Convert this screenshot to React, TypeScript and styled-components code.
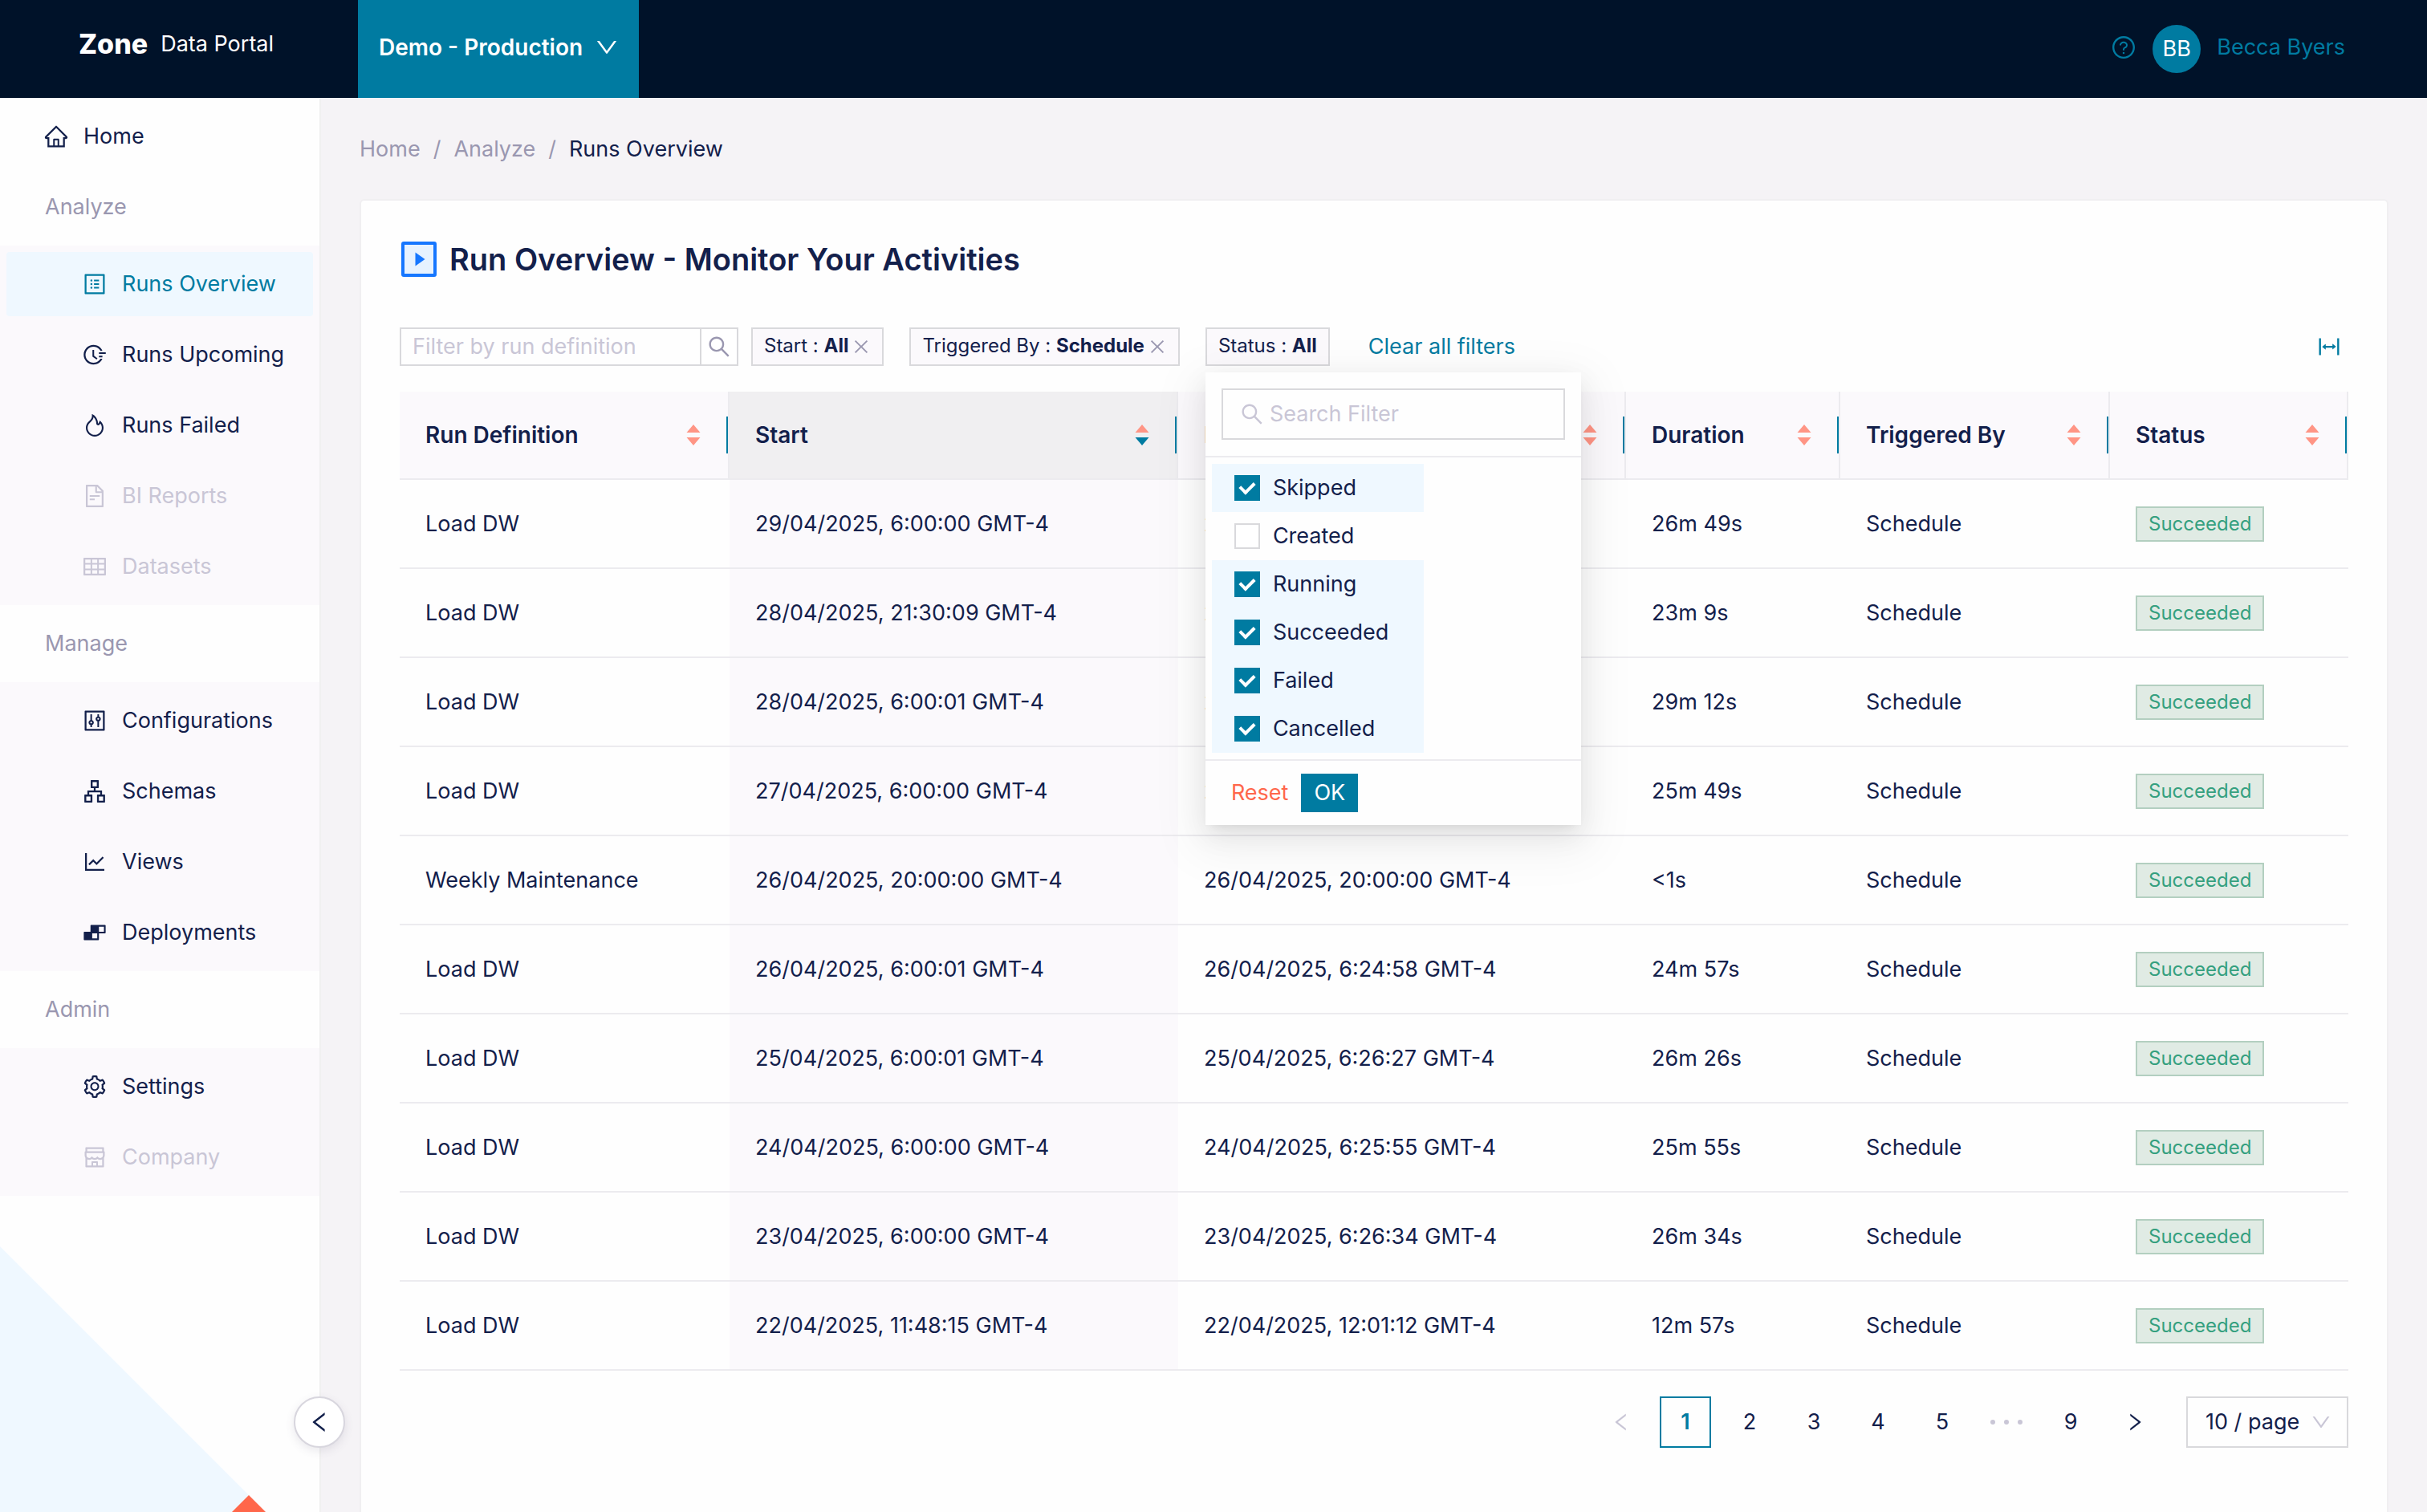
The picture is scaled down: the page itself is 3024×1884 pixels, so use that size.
import React, { useState } from 'react';
import styled, { createGlobalStyle } from 'styled-components';
import {
  AiFillBuild,
  AiOutlineApartment,
  AiOutlineClose,
  AiOutlineColumnWidth,
  AiOutlineControl,
  AiOutlineDown,
  AiOutlineFieldTime,
  AiOutlineFileText,
  AiOutlineFire,
  AiOutlineHome,
  AiOutlineLeft,
  AiOutlineLineChart,
  AiOutlineProfile,
  AiOutlineQuestionCircle,
  AiOutlineRight,
  AiOutlineSearch,
  AiOutlineSetting,
  AiOutlineShop,
  AiOutlineTable,
} from 'react-icons/ai';

const c = {
  navy: '#001229',
  teal: '#007ba1',
  text: '#13204b',
  muted: '#9a97b0',
  disabled: '#c9c6d6',
  coral: '#ff674b',
  sorter: '#ff9585',
  page: '#f5f3f6',
  soft: '#fbf9fc',
  select: '#eff8ff',
  line: '#ecebef',
  border: '#d9d9dc',
};

const GlobalStyle = createGlobalStyle`
  *, *::before, *::after { box-sizing: border-box; }
  body {
    margin: 0;
    background: ${c.page};
    color: ${c.text};
    font-family: Inter, "Liberation Sans", sans-serif;
    font-size: 27px;
    line-height: 44px;
  }
  button, input, select { font: inherit; color: inherit; margin: 0; }
  button { cursor: pointer; }
  a { color: inherit; text-decoration: none; }
  svg { display: block; flex: none; }
`;

const Shell = styled.div`
  display: flex;
  flex-direction: column;
  height: 100vh;
`;

const Header = styled.header`
  display: flex;
  height: 122px;
  flex: none;
  background: ${c.navy};
  color: #fff;
`;

const Brand = styled.a`
  display: flex;
  align-items: center;
  gap: 16px;
  width: 446px;
  padding: 0 0 12px 98px;
`;

const BrandName = styled.strong`
  font-size: 34px;
  font-weight: 800;
`;

const EnvButton = styled.button`
  display: flex;
  align-items: center;
  gap: 14px;
  padding: 0 24px 4px 26px;
  border: 0;
  background: ${c.teal};
  color: #fff;
  font-size: 28px;
  font-weight: 600;
`;

const UserArea = styled.div`
  display: flex;
  align-items: center;
  gap: 20px;
  margin-left: auto;
  padding: 0 102px 4px 0;
  color: ${c.teal};
`;

const PlainButton = styled.button`
  display: flex;
  padding: 0;
  border: 0;
  background: none;
  color: inherit;
`;

const Avatar = styled.span`
  width: 60px;
  height: 60px;
  margin-top: 4px;
  border-radius: 50%;
  background: ${c.teal};
  color: #fff;
  line-height: 60px;
  text-align: center;
`;

const Body = styled.div`
  display: flex;
  flex: 1;
  min-height: 0;
`;

const Sidebar = styled.aside`
  position: relative;
  display: flex;
  flex-direction: column;
  flex: none;
  width: 400px;
  border-right: 2px solid #f0f0f0;
  background: #fefefe;
`;

const Nav = styled.nav`
  display: flex;
  flex-direction: column;
  padding-top: 8px;
`;

const NavItem = styled.a<{ $nested?: boolean; $active?: boolean; $disabled?: boolean }>`
  display: flex;
  align-items: center;
  gap: 18px;
  height: 80px;
  margin: 0 8px;
  padding-left: ${(p) => (p.$nested ? 94 : 46)}px;
  border-radius: 4px;
  background: ${(p) => (p.$active ? c.select : 'transparent')};
  color: ${(p) => (p.$active ? c.teal : p.$disabled ? c.disabled : c.text)};
`;

const NavHeading = styled.h2`
  height: 80px;
  margin: 8px 0;
  padding-left: 56px;
  color: ${c.muted};
  font-size: 27px;
  font-weight: 400;
  line-height: 80px;
`;

const NavGroup = styled.div`
  display: flex;
  flex-direction: column;
  gap: 8px;
  padding: 8px 0;
  background: ${c.soft};
`;

const Backdrop = styled.svg`
  margin-top: auto;
  width: 100%;
`;

const CollapseButton = styled.button`
  position: absolute;
  right: -32px;
  bottom: 80px;
  display: flex;
  align-items: center;
  justify-content: center;
  width: 64px;
  height: 64px;
  padding: 0;
  border: 2px solid #d8d6de;
  border-radius: 50%;
  background: #fff;
  box-shadow: 0 4px 12px rgba(80, 70, 110, 0.12);
`;

const Main = styled.main`
  display: flex;
  flex-direction: column;
  flex: 1;
  min-width: 0;
  padding: 42px 48px 0;
  overflow-y: auto;
  scrollbar-width: none;
`;

const Crumbs = styled.nav`
  display: flex;
  gap: 16px;
  margin-bottom: 40px;
  color: ${c.muted};
`;

const CurrentCrumb = styled.span`
  color: ${c.text};
`;

const Card = styled.section`
  padding: 44px 48px 96px;
  border: 2px solid #f0eff1;
  border-radius: 6px;
  background: #fefefe;
`;

const TitleRow = styled.div`
  display: flex;
  align-items: center;
  gap: 16px;
  margin-bottom: 56px;
  padding-left: 2px;
`;

const Title = styled.h1`
  margin: 0;
  font-size: 38px;
  font-weight: 600;
  line-height: 58px;
`;

const FilterRow = styled.div`
  display: flex;
  align-items: center;
  gap: 32px;
  height: 48px;
  margin-bottom: 32px;
`;

const SearchBox = styled.div`
  display: flex;
  width: 422px;
  height: 48px;
  margin-right: -16px;
  border: 2px solid ${c.border};
`;

const TextInput = styled.input`
  flex: 1;
  min-width: 0;
  padding: 0 14px;
  border: 0;
  outline: 0;
  background: transparent;
  &::placeholder { color: ${c.disabled}; opacity: 1; }
`;

const SearchButton = styled.button`
  display: flex;
  align-items: center;
  justify-content: center;
  width: 46px;
  padding: 0;
  border: 0;
  border-left: 2px solid ${c.border};
  background: #fff;
  color: ${c.muted};
`;

const FilterAnchor = styled.div`
  position: relative;
`;

const FilterTag = styled.div`
  display: flex;
  align-items: center;
  gap: 4px;
  height: 48px;
  padding: 0 14px;
  border: 2px solid ${c.border};
  background: ${c.soft};
  font-size: 24px;
  line-height: 40px;
  white-space: pre;
  ${PlainButton} { color: ${c.muted}; }
`;

const TagText = styled.span`
  padding-bottom: 2px;
`;

const ClearButton = styled(PlainButton)`
  margin-left: 16px;
  color: ${c.teal};
`;

const WidthButton = styled(PlainButton)`
  margin-left: auto;
  margin-right: 8px;
  color: ${c.teal};
`;

const Popup = styled.div`
  position: absolute;
  z-index: 2;
  top: 56px;
  left: 0;
  width: 468px;
  background: #fefefe;
  box-shadow:
    0 12px 32px rgba(0, 0, 0, 0.08),
    0 6px 12px -8px rgba(0, 0, 0, 0.12),
    0 18px 56px 16px rgba(0, 0, 0, 0.05);
`;

const PopupSearch = styled.div`
  padding: 20px;
  border-bottom: 2px solid ${c.line};
`;

const PopupField = styled.label`
  display: flex;
  align-items: center;
  height: 64px;
  padding-left: 20px;
  border: 2px solid ${c.border};
  color: ${c.disabled};
  ${TextInput} { padding: 0 6px; }
`;

const OptionList = styled.div`
  width: 264px;
  margin: 8px;
`;

const Option = styled.label<{ $checked: boolean }>`
  display: flex;
  align-items: center;
  gap: 16px;
  height: 60px;
  padding-left: 28px;
  background: ${(p) => (p.$checked ? c.select : 'transparent')};
`;

const Checkbox = styled.input`
  appearance: none;
  display: flex;
  justify-content: center;
  width: 32px;
  height: 32px;
  border: 2px solid ${c.border};
  background: #fff;
  &:checked {
    border-color: ${c.teal};
    background: ${c.teal};
  }
  &:checked::after {
    content: '';
    width: 12px;
    height: 18px;
    margin-top: 3px;
    border: solid #fff;
    border-width: 0 4px 4px 0;
    transform: rotate(45deg);
  }
`;

const PopupFooter = styled.div`
  display: flex;
  padding: 16px;
  border-top: 2px solid ${c.line};
`;

const SmallButton = styled.button<{ $primary?: boolean }>`
  height: 48px;
  padding: 0 16px;
  border: 0;
  background: ${(p) => (p.$primary ? c.teal : 'transparent')};
  color: ${(p) => (p.$primary ? '#fff' : c.coral)};
`;

const Table = styled.table`
  width: 100%;
  table-layout: fixed;
  border-collapse: separate;
  border-spacing: 0;
  text-align: left;
`;

const Th = styled.th<{ $sorted: boolean }>`
  height: 110px;
  padding: 0;
  border-right: 2px solid ${c.line};
  border-bottom: 2px solid ${c.line};
  background: ${(p) => (p.$sorted ? '#f0eff1' : c.soft)};
  font-size: 28px;
  font-weight: 600;
`;

const ThInner = styled.div`
  display: flex;
  align-items: center;
  padding-left: 32px;
`;

const SortButton = styled(PlainButton)`
  margin: 0 32px 0 auto;
`;

const ResizeBar = styled.span`
  width: 2px;
  height: 46px;
  background: ${c.teal};
`;

const Td = styled.td<{ $sorted?: boolean }>`
  height: 111px;
  padding: 0 0 0 32px;
  border-bottom: 2px solid ${c.line};
  background: ${(p) => (p.$sorted ? c.soft : 'transparent')};
  white-space: nowrap;
`;

const StatusTag = styled.span`
  display: block;
  width: fit-content;
  height: 44px;
  padding: 0 14px;
  border: 2px solid #b3cfc0;
  background: #e0ebe4;
  color: #35a07f;
  font-size: 24px;
  line-height: 40px;
`;

const Pagination = styled.nav`
  display: flex;
  justify-content: flex-end;
  gap: 16px;
  margin-top: 32px;
`;

const PageButton = styled.button<{ $active?: boolean; $faint?: boolean }>`
  display: flex;
  align-items: center;
  justify-content: center;
  width: 64px;
  height: 64px;
  padding: 0;
  border: 2px solid ${(p) => (p.$active ? c.teal : 'transparent')};
  background: transparent;
  color: ${(p) => (p.$active ? c.teal : p.$faint ? c.disabled : c.text)};
  font-weight: ${(p) => (p.$active ? 600 : 400)};
`;

const PageSize = styled.div`
  display: flex;
  align-items: center;
  width: 202px;
  height: 64px;
  margin-left: 16px;
  border: 2px solid ${c.border};
  color: ${c.disabled};
  svg { margin-left: -46px; pointer-events: none; }
`;

const PageSelect = styled.select`
  appearance: none;
  flex: none;
  width: 100%;
  height: 60px;
  padding: 0 22px;
  border: 0;
  outline: 0;
  background: transparent;
  color: ${c.text};
`;

const navGroups = [
  {
    title: 'Analyze',
    items: [
      { label: 'Runs Overview', icon: AiOutlineProfile, active: true },
      { label: 'Runs Upcoming', icon: AiOutlineFieldTime },
      { label: 'Runs Failed', icon: AiOutlineFire },
      { label: 'BI Reports', icon: AiOutlineFileText, disabled: true },
      { label: 'Datasets', icon: AiOutlineTable, disabled: true },
    ],
  },
  {
    title: 'Manage',
    items: [
      { label: 'Configurations', icon: AiOutlineControl },
      { label: 'Schemas', icon: AiOutlineApartment },
      { label: 'Views', icon: AiOutlineLineChart },
      { label: 'Deployments', icon: AiFillBuild },
    ],
  },
  {
    title: 'Admin',
    items: [
      { label: 'Settings', icon: AiOutlineSetting },
      { label: 'Company', icon: AiOutlineShop, disabled: true },
    ],
  },
] as {
  title: string;
  items: { label: string; icon: React.ComponentType<{ size?: number }>; active?: boolean; disabled?: boolean }[];
}[];

const columns = [
  { title: 'Run Definition', width: 411 },
  { title: 'Start', width: 559, sorted: true },
  { title: 'End', width: 558 },
  { title: 'Duration', width: 267 },
  { title: 'Triggered By', width: 336 },
  { title: 'Status', width: 297 },
];

const runs = [
  ['Load DW', '29/04/2025, 6:00:00 GMT-4', '29/04/2025, 6:26:49 GMT-4', '26m 49s'],
  ['Load DW', '28/04/2025, 21:30:09 GMT-4', '28/04/2025, 21:53:18 GMT-4', '23m 9s'],
  ['Load DW', '28/04/2025, 6:00:01 GMT-4', '28/04/2025, 6:29:13 GMT-4', '29m 12s'],
  ['Load DW', '27/04/2025, 6:00:00 GMT-4', '27/04/2025, 6:25:49 GMT-4', '25m 49s'],
  ['Weekly Maintenance', '26/04/2025, 20:00:00 GMT-4', '26/04/2025, 20:00:00 GMT-4', '<1s'],
  ['Load DW', '26/04/2025, 6:00:01 GMT-4', '26/04/2025, 6:24:58 GMT-4', '24m 57s'],
  ['Load DW', '25/04/2025, 6:00:01 GMT-4', '25/04/2025, 6:26:27 GMT-4', '26m 26s'],
  ['Load DW', '24/04/2025, 6:00:00 GMT-4', '24/04/2025, 6:25:55 GMT-4', '25m 55s'],
  ['Load DW', '23/04/2025, 6:00:00 GMT-4', '23/04/2025, 6:26:34 GMT-4', '26m 34s'],
  ['Load DW', '22/04/2025, 11:48:15 GMT-4', '22/04/2025, 12:01:12 GMT-4', '12m 57s'],
];

const statuses = ['Skipped', 'Created', 'Running', 'Succeeded', 'Failed', 'Cancelled'];

const SortIcon = ({ descending }: { descending?: boolean }) => (
  <svg width="18" height="26" viewBox="0 0 18 26" aria-hidden="true">
    <path d="M9 0L17.5 10H0.5z" fill={c.sorter} />
    <path d="M9 26L0.5 16H17.5z" fill={descending ? c.teal : c.sorter} />
  </svg>
);

const PlaySquareIcon = () => (
  <svg width="44" height="44" viewBox="0 0 44 44" aria-hidden="true">
    <rect x="2" y="2" width="40" height="40" rx="1" fill="#e6f2ff" stroke="#1677ff" strokeWidth="4" />
    <path d="M17.5 13.5L29.5 22L17.5 30.5z" fill="#1677ff" />
  </svg>
);

const EllipsisIcon = () => (
  <svg width="42" height="8" viewBox="0 0 42 8" fill={c.disabled} aria-hidden="true">
    <circle cx="4" cy="4" r="3" />
    <circle cx="21" cy="4" r="3" />
    <circle cx="38" cy="4" r="3" />
  </svg>
);

function StatusFilter() {
  const [checked, setChecked] = useState<string[]>(statuses.filter((s) => s !== 'Created'));
  const toggle = (name: string) =>
    setChecked((prev) => (prev.includes(name) ? prev.filter((s) => s !== name) : [...prev, name]));

  return (
    <Popup role="dialog" aria-label="Status filter">
      <PopupSearch>
        <PopupField>
          <AiOutlineSearch size={32} />
          <TextInput placeholder="Search Filter" aria-label="Search Filter" />
        </PopupField>
      </PopupSearch>
      <OptionList>
        {statuses.map((s) => (
          <Option key={s} $checked={checked.includes(s)}>
            <Checkbox type="checkbox" checked={checked.includes(s)} onChange={() => toggle(s)} />
            {s}
          </Option>
        ))}
      </OptionList>
      <PopupFooter>
        <SmallButton onClick={() => setChecked([])}>Reset</SmallButton>
        <SmallButton $primary>OK</SmallButton>
      </PopupFooter>
    </Popup>
  );
}

export default function App() {
  return (
    <Shell>
      <GlobalStyle />
      <Header>
        <Brand href="#home">
          <BrandName>Zone</BrandName>
          <span>Data Portal</span>
        </Brand>
        <EnvButton>
          Demo - Production
          <AiOutlineDown size={32} />
        </EnvButton>
        <UserArea>
          <PlainButton aria-label="Help">
            <AiOutlineQuestionCircle size={32} />
          </PlainButton>
          <Avatar>BB</Avatar>
          <a href="#account">Becca Byers</a>
        </UserArea>
      </Header>
      <Body>
        <Sidebar>
          <Nav aria-label="Main">
            <NavItem href="#home">
              <AiOutlineHome size={32} />
              Home
            </NavItem>
            {navGroups.map((group) => (
              <React.Fragment key={group.title}>
                <NavHeading>{group.title}</NavHeading>
                <NavGroup>
                  {group.items.map(({ label, icon: Icon, active, disabled }) => (
                    <NavItem
                      key={label}
                      href={disabled ? undefined : '#' + label}
                      $nested
                      $active={active}
                      $disabled={disabled}
                    >
                      <Icon size={32} />
                      {label}
                    </NavItem>
                  ))}
                </NavGroup>
              </React.Fragment>
            ))}
          </Nav>
          <Backdrop viewBox="0 0 398 331" aria-hidden="true">
            <path d="M0 0L331 331H0z" fill={c.select} />
            <path d="M310 310L331 331H289z" fill={c.coral} />
          </Backdrop>
          <CollapseButton aria-label="Collapse sidebar">
            <AiOutlineLeft size={32} />
          </CollapseButton>
        </Sidebar>
        <Main>
          <Crumbs aria-label="Breadcrumb">
            <a href="#home">Home</a>
            <span>/</span>
            <a href="#analyze">Analyze</a>
            <span>/</span>
            <CurrentCrumb>Runs Overview</CurrentCrumb>
          </Crumbs>
          <Card>
            <TitleRow>
              <PlaySquareIcon />
              <Title>Run Overview - Monitor Your Activities</Title>
            </TitleRow>
            <FilterRow>
              <SearchBox>
                <TextInput placeholder="Filter by run definition" aria-label="Filter by run definition" />
                <SearchButton aria-label="Search">
                  <AiOutlineSearch size={32} />
                </SearchButton>
              </SearchBox>
              <FilterTag>
                <TagText>
                  Start : <b>All</b>
                </TagText>
                <PlainButton aria-label="Remove start filter">
                  <AiOutlineClose size={24} />
                </PlainButton>
              </FilterTag>
              <FilterTag>
                <TagText>
                  Triggered By : <b>Schedule</b>
                </TagText>
                <PlainButton aria-label="Remove triggered by filter">
                  <AiOutlineClose size={24} />
                </PlainButton>
              </FilterTag>
              <FilterAnchor>
                <FilterTag>
                  <TagText>
                    Status : <b>All</b>
                  </TagText>
                </FilterTag>
                <StatusFilter />
              </FilterAnchor>
              <ClearButton>Clear all filters</ClearButton>
              <WidthButton aria-label="Fit column widths">
                <AiOutlineColumnWidth size={32} />
              </WidthButton>
            </FilterRow>
            <Table>
              <colgroup>
                {columns.map((col) => (
                  <col key={col.title} style={{ width: col.width }} />
                ))}
              </colgroup>
              <thead>
                <tr>
                  {columns.map((col) => (
                    <Th key={col.title} scope="col" $sorted={!!col.sorted}>
                      <ThInner>
                        {col.title}
                        <SortButton aria-label={'Sort by ' + col.title}>
                          <SortIcon descending={col.sorted} />
                        </SortButton>
                        <ResizeBar />
                      </ThInner>
                    </Th>
                  ))}
                </tr>
              </thead>
              <tbody>
                {runs.map(([name, start, end, duration]) => (
                  <tr key={start}>
                    <Td>{name}</Td>
                    <Td $sorted>{start}</Td>
                    <Td>{end}</Td>
                    <Td>{duration}</Td>
                    <Td>Schedule</Td>
                    <Td>
                      <StatusTag>Succeeded</StatusTag>
                    </Td>
                  </tr>
                ))}
              </tbody>
            </Table>
            <Pagination aria-label="Pagination">
              <PageButton $faint aria-label="Previous page">
                <AiOutlineLeft size={28} />
              </PageButton>
              {[1, 2, 3, 4, 5].map((n) => (
                <PageButton key={n} $active={n === 1}>
                  {n}
                </PageButton>
              ))}
              <PageButton $faint aria-label="Next 5 pages">
                <EllipsisIcon />
              </PageButton>
              <PageButton>9</PageButton>
              <PageButton aria-label="Next page">
                <AiOutlineRight size={28} />
              </PageButton>
              <PageSize>
                <PageSelect aria-label="Rows per page" defaultValue="10">
                  <option value="10">10 / page</option>
                  <option value="20">20 / page</option>
                  <option value="50">50 / page</option>
                </PageSelect>
                <AiOutlineDown size={28} />
              </PageSize>
            </Pagination>
          </Card>
        </Main>
      </Body>
    </Shell>
  );
}
